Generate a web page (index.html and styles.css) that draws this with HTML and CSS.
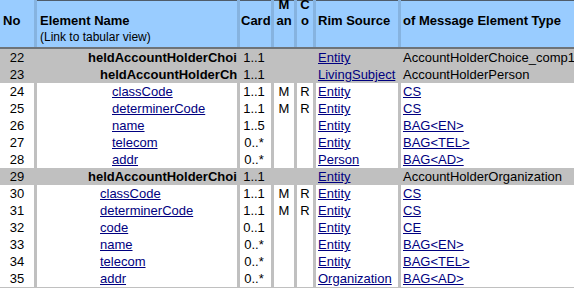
FILE: index.html
```html
<!DOCTYPE html>
<html>
<head>
<meta charset="utf-8">
<link rel="stylesheet" href="styles.css">
</head>
<body>
<div class="sheet">
  <div class="row head">
    <div class="h no">No</div>
    <div class="h name top">Element Name<br><span class="sub">(Link to tabular view)</span></div>
    <div class="h card top">Card</div>
    <div class="h man top"><span class="up">M<br>an</span></div>
    <div class="h co top"><span class="up">C<br>o</span></div>
    <div class="h rim top">Rim Source</div>
    <div class="h type top">of Message Element Type</div>
  </div>

  <div class="row grp">
    <div class="c num">22</div>
    <div class="c name b l4">heldAccountHolderChoice</div>
    <div class="c mid cardc">1..1</div>
    <div class="c mid"></div>
    <div class="c mid"></div>
    <div class="c txt"><a href="#">Entity</a></div>
    <div class="c txt">AccountHolderChoice_comp1_</div>
  </div>
  <div class="row grp">
    <div class="c num">23</div>
    <div class="c name b l5">heldAccountHolderChoice</div>
    <div class="c mid cardc">1..1</div>
    <div class="c mid"></div>
    <div class="c mid"></div>
    <div class="c txt"><a href="#">LivingSubject</a></div>
    <div class="c txt">AccountHolderPerson</div>
  </div>
  <div class="row">
    <div class="c num">24</div>
    <div class="c name l6"><a href="#">classCode</a></div>
    <div class="c mid cardc">1..1</div>
    <div class="c mid">M</div>
    <div class="c mid">R</div>
    <div class="c txt"><a href="#">Entity</a></div>
    <div class="c txt"><a href="#">CS</a></div>
  </div>
  <div class="row">
    <div class="c num">25</div>
    <div class="c name l6"><a href="#">determinerCode</a></div>
    <div class="c mid cardc">1..1</div>
    <div class="c mid">M</div>
    <div class="c mid">R</div>
    <div class="c txt"><a href="#">Entity</a></div>
    <div class="c txt"><a href="#">CS</a></div>
  </div>
  <div class="row">
    <div class="c num">26</div>
    <div class="c name l6"><a href="#">name</a></div>
    <div class="c mid cardc">1..5</div>
    <div class="c mid"></div>
    <div class="c mid"></div>
    <div class="c txt"><a href="#">Entity</a></div>
    <div class="c txt"><a href="#">BAG&lt;EN&gt;</a></div>
  </div>
  <div class="row">
    <div class="c num">27</div>
    <div class="c name l6"><a href="#">telecom</a></div>
    <div class="c mid cardc">0..*</div>
    <div class="c mid"></div>
    <div class="c mid"></div>
    <div class="c txt"><a href="#">Entity</a></div>
    <div class="c txt"><a href="#">BAG&lt;TEL&gt;</a></div>
  </div>
  <div class="row">
    <div class="c num">28</div>
    <div class="c name l6"><a href="#">addr</a></div>
    <div class="c mid cardc">0..*</div>
    <div class="c mid"></div>
    <div class="c mid"></div>
    <div class="c txt"><a href="#">Person</a></div>
    <div class="c txt"><a href="#">BAG&lt;AD&gt;</a></div>
  </div>
  <div class="row grp">
    <div class="c num">29</div>
    <div class="c name b l4">heldAccountHolderChoice</div>
    <div class="c mid cardc">1..1</div>
    <div class="c mid"></div>
    <div class="c mid"></div>
    <div class="c txt"><a href="#">Entity</a></div>
    <div class="c txt">AccountHolderOrganization</div>
  </div>
  <div class="row">
    <div class="c num">30</div>
    <div class="c name l5"><a href="#">classCode</a></div>
    <div class="c mid cardc">1..1</div>
    <div class="c mid">M</div>
    <div class="c mid">R</div>
    <div class="c txt"><a href="#">Entity</a></div>
    <div class="c txt"><a href="#">CS</a></div>
  </div>
  <div class="row">
    <div class="c num">31</div>
    <div class="c name l5"><a href="#">determinerCode</a></div>
    <div class="c mid cardc">1..1</div>
    <div class="c mid">M</div>
    <div class="c mid">R</div>
    <div class="c txt"><a href="#">Entity</a></div>
    <div class="c txt"><a href="#">CS</a></div>
  </div>
  <div class="row">
    <div class="c num">32</div>
    <div class="c name l5"><a href="#">code</a></div>
    <div class="c mid cardc">0..1</div>
    <div class="c mid"></div>
    <div class="c mid"></div>
    <div class="c txt"><a href="#">Entity</a></div>
    <div class="c txt"><a href="#">CE</a></div>
  </div>
  <div class="row">
    <div class="c num">33</div>
    <div class="c name l5"><a href="#">name</a></div>
    <div class="c mid cardc">0..*</div>
    <div class="c mid"></div>
    <div class="c mid"></div>
    <div class="c txt"><a href="#">Entity</a></div>
    <div class="c txt"><a href="#">BAG&lt;EN&gt;</a></div>
  </div>
  <div class="row">
    <div class="c num">34</div>
    <div class="c name l5"><a href="#">telecom</a></div>
    <div class="c mid cardc">0..*</div>
    <div class="c mid"></div>
    <div class="c mid"></div>
    <div class="c txt"><a href="#">Entity</a></div>
    <div class="c txt"><a href="#">BAG&lt;TEL&gt;</a></div>
  </div>
  <div class="row last">
    <div class="c num">35</div>
    <div class="c name l5"><a href="#">addr</a></div>
    <div class="c mid cardc">0..*</div>
    <div class="c mid"></div>
    <div class="c mid"></div>
    <div class="c txt"><a href="#">Organization</a></div>
    <div class="c txt"><a href="#">BAG&lt;AD&gt;</a></div>
  </div>
</div>
</body>
</html>
```
FILE: styles.css
```css
html, body {
  margin: 0;
  padding: 0;
  background: #ffffff;
}
body {
  font-family: "Liberation Sans", Arial, sans-serif;
  font-size: 13px;
  color: #000;
  overflow: hidden;
}
.sheet {
  width: 574px;
}
.row {
  display: grid;
  grid-template-columns: 34px 200px 31px 20px 16px 82px 173px;
  column-gap: 3px;
  height: 17px;
  background: #c0c0c0;
}
.row > div {
  background: #ffffff;
  overflow: hidden;
  white-space: nowrap;
  line-height: 17px;
}
.row.grp > div {
  background: #c0c0c0;
}
.row.last {
  height: 18px;
  border-bottom: 1px solid #c0c0c0;
}
.row.last > div {
  height: 17px;
}
.head {
  height: 47px;
  background: #86b3e0;
  border-bottom: 2px solid #6e7378;
}
.head > .h {
  background: #99ccff;
  font-weight: bold;
  line-height: 16px;
  padding-top: 13px;
  box-sizing: border-box;
  height: 47px;
}
.head > .top {
  box-shadow: inset 0 1px 0 #4f5c6a;
}
.h.no { padding-left: 3px; }
.h.name { padding-left: 3px; }
.h.card { padding-left: 1px; }
.h.man, .h.co { text-align: center; }
.h.rim { padding-left: 2px; }
.h.type { padding-left: 2px; }
.up {
  display: block;
  margin-top: -16px;
}
.sub {
  font-weight: normal;
  font-size: 12px;
}
.c.num { text-align: center; }
.c.mid { text-align: center; }
.c.cardc { padding-right: 3px; }
.c.txt { padding-left: 2px; }
.c.b { font-weight: bold; }
.l4 { padding-left: 51px; }
.l5 { padding-left: 63px; }
.l6 { padding-left: 75px; }
a {
  color: #000080;
  text-decoration: underline;
}
```
